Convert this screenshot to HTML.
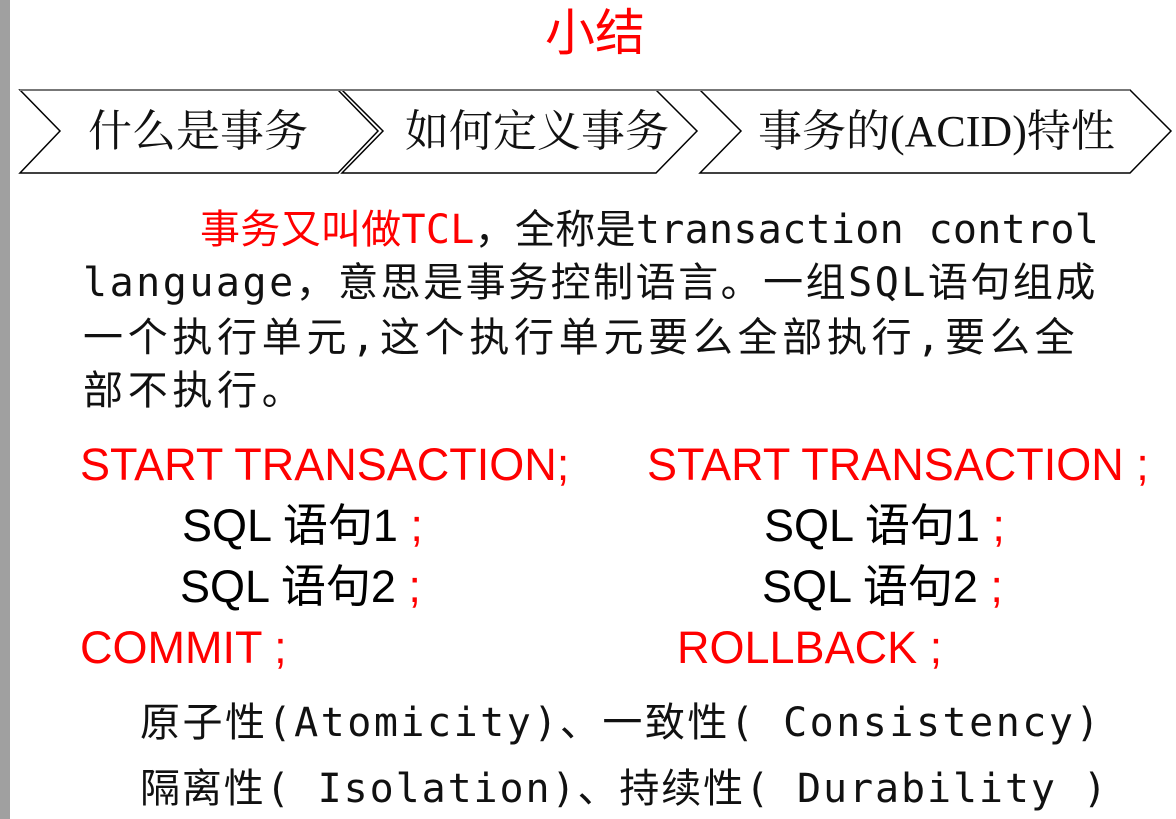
<!DOCTYPE html>
<html><head><meta charset="utf-8"><style>
html,body{margin:0;padding:0;background:#fff;}
body{width:1176px;height:819px;position:relative;overflow:hidden;}
.bar{position:absolute;left:0;top:0;width:10px;height:819px;background:#a0a0a0;}
.t{position:absolute;white-space:nowrap;}
.cjk{font-family:"DejaVu Sans Mono","Noto Sans CJK SC",sans-serif;font-size:40px;color:#111;line-height:1;letter-spacing:2.5px;}
.ser{font-family:"Liberation Serif","Noto Serif CJK SC",serif;font-size:44px;color:#111;line-height:1;}
.ar{font-family:"Liberation Sans","Noto Sans CJK SC",sans-serif;font-size:45px;line-height:1;color:#000;}
.r{color:#f00;}
</style></head><body>
<div class="bar"></div>
<div class="t r" style="left:545px;top:2px;font-family:'Noto Sans CJK SC',sans-serif;font-size:50px;line-height:1.1;">小结</div>
<svg style="position:absolute;left:0;top:0" width="1176" height="200">
<g fill="#fff" stroke="#000" stroke-width="1.5">
<polygon points="20,90 338,90 378,131 338,173 20,173 60,131"/>
<polygon points="342,90 656,90 697,131 656,173 342,173 383,131"/>
<polygon points="700,90 1130,90 1171,131 1130,173 700,173 741,131"/>
</g>
<g stroke="#777" stroke-width="2"><line x1="20" y1="90" x2="1130" y2="90"/></g>
</svg>
<div class="t ser" style="left:88px;top:110px;">什么是事务</div>
<div class="t ser" style="left:405px;top:110px;">如何定义事务</div>
<div class="t ser" style="left:758px;top:110px;">事务的(ACID)特性</div>

<div class="t cjk" style="left:200px;top:210px;letter-spacing:0.3px;"><span class="r">事务又叫做TCL</span>，全称是transaction control</div>
<div class="t cjk" style="left:83px;top:263px;">language，意思是事务控制语言。一组SQL语句组成</div>
<div class="t cjk" style="left:83px;top:318px;letter-spacing:4.7px;">一个执行单元,这个执行单元要么全部执行,要么全</div>
<div class="t cjk" style="left:83px;top:371px;letter-spacing:4.7px;">部不执行。</div>

<div class="t ar r" style="left:80px;top:442px;">START TRANSACTION;</div>
<div class="t ar" style="left:182px;top:503px;">SQL 语句1 <span class="r">;</span></div>
<div class="t ar" style="left:180px;top:564px;">SQL 语句2 <span class="r">;</span></div>
<div class="t ar r" style="left:80px;top:625px;">COMMIT ;</div>
<div class="t ar r" style="left:647px;top:442px;">START TRANSACTION ;</div>
<div class="t ar" style="left:764px;top:503px;">SQL 语句1 <span class="r">;</span></div>
<div class="t ar" style="left:762px;top:564px;">SQL 语句2 <span class="r">;</span></div>
<div class="t ar r" style="left:677px;top:625px;">ROLLBACK ;</div>

<div class="t cjk" style="left:140px;top:703px;letter-spacing:2.5px;">原子性(Atomicity)、一致性( Consistency)</div>
<div class="t cjk" style="left:140px;top:769px;letter-spacing:1.9px;">隔离性( Isolation)、持续性( Durability )</div>
</body></html>
